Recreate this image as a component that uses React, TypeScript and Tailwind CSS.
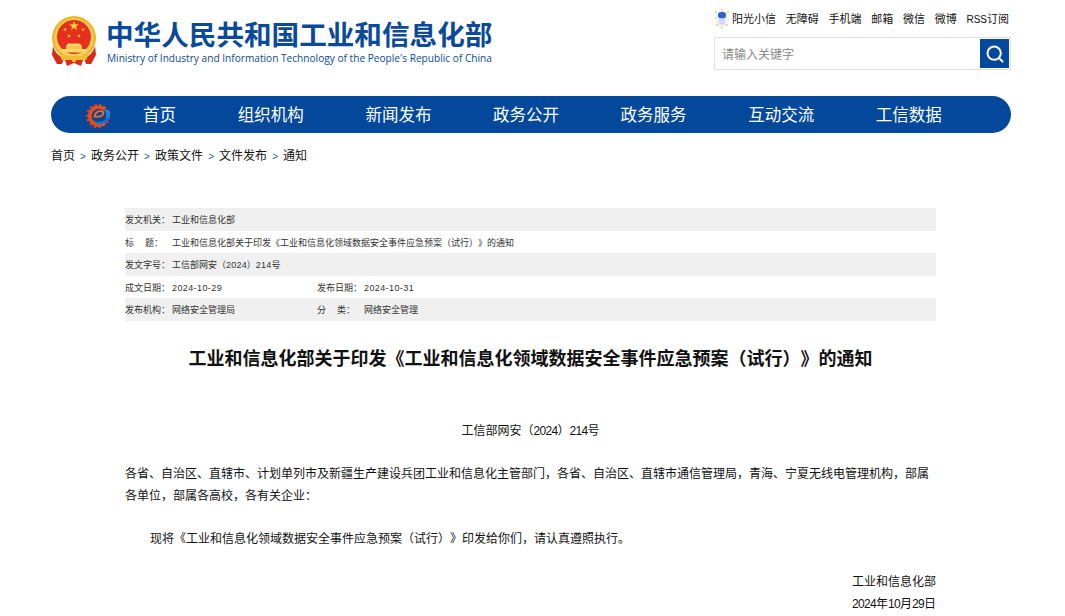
import { Search } from 'lucide-react';

const cjk = "font-['Liberation_Sans','Noto_Sans_CJK_SC',sans-serif] [text-spacing-trim:space-all]";

const topLinks = ['无障碍', '手机端', '邮箱', '微信', '微博'];
const navItems = ['组织机构', '新闻发布', '政务公开', '政务服务', '互动交流', '工信数据'];
const crumbs = ['首页', '政务公开', '政策文件', '文件发布', '通知'];

function Star({ x, y, r }: { x: number; y: number; r: number }) {
  const pts = Array.from({ length: 10 }, (_, i) => {
    const a = (Math.PI / 5) * i - Math.PI / 2;
    const d = i % 2 ? r * 0.42 : r;
    return `${x + d * Math.cos(a)},${y + d * Math.sin(a)}`;
  }).join(' ');
  return <polygon points={pts} fill="#f6d12f" />;
}

function Emblem() {
  return (
    <svg width="46" height="50" viewBox="0 0 46 50">
      <circle cx="23" cy="22" r="22" fill="#f0b52a" />
      <circle cx="23" cy="22" r="19.5" fill="#f7cf55" />
      <circle cx="23" cy="21" r="17" fill="#e5301f" />
      <Star x={23} y={10} r={5} />
      <Star x={14} y={13.5} r={2} />
      <Star x={32} y={13.5} r={2} />
      <Star x={18} y={20} r={2} />
      <Star x={28} y={20} r={2} />
      <path d="M17 27.5h12l2 2.5H15z" fill="#f8d66a" />
      <rect x="15" y="30" width="16" height="3" fill="#f6c845" />
      <rect x="11" y="33" width="24" height="3.5" fill="#f8d66a" />
      <path d="M2 30c2 7 6 10 11 12l-2 6H6l-5-9z" fill="#d92a1c" />
      <path d="M44 30c-2 7-6 10-11 12l2 6h5l5-9z" fill="#d92a1c" />
      <path d="M8 38c5 3 10 2 15 2s10 1 15-2l-3 6c-4 1-8 0-12 1-4-1-8 0-12-1z" fill="#f3bd34" />
      <path d="M14 44h18l-2 6-7-3-7 3z" fill="#dc2b1d" />
      <circle cx="23" cy="44" r="2.2" fill="#f3bd34" />
    </svg>
  );
}

function GearLogo() {
  return (
    <svg width="26" height="26" viewBox="0 0 26 26">
      <circle cx="12" cy="13" r="10.8" fill="none" stroke="#d9421e" strokeWidth="2.6" strokeDasharray="2.4 2.3" />
      <path d="M19 6.5A9 9 0 1 0 19 19.5" fill="none" stroke="#ee4a18" strokeWidth="3.6" />
      <path d="M8.5 14.5c0-4 3-6.5 6-6.5 2.6 0 3.6 2 2.2 3.8-1.4 1.6-4.4 2-7.2 1.8" fill="none" stroke="#f26a1b" strokeWidth="2" />
      <path d="M8 17.5c4 2.5 11 2.5 16-6.5.8 5-5 11-11 10.5-2-.2-4-1.5-5-4z" fill="#1577c8" />
      <path d="M18 7c3-1 6 0 6.5 3-1 3-3 5-5 6 1.5-3 1.5-6-1.5-9z" fill="#1b8ad6" />
    </svg>
  );
}

function Bulb() {
  return (
    <svg width="16" height="20" viewBox="0 0 16 20">
      <ellipse cx="8" cy="10" rx="6.5" ry="8.5" fill="#eef1fb" />
      <rect x="4" y="3" width="8" height="6.5" rx="3.2" fill="#2f62c9" />
      <rect x="5" y="9.5" width="6" height="6" fill="#cfd8f2" />
      <circle cx="2" cy="3" r="0.9" fill="#f2c53a" />
      <circle cx="8" cy="0.9" r="0.8" fill="#f2c53a" />
      <circle cx="14" cy="3" r="0.9" fill="#f2c53a" />
      <circle cx="1.5" cy="9" r="0.8" fill="#f2c53a" />
      <circle cx="3" cy="16" r="0.9" fill="#f2c53a" />
      <circle cx="8" cy="18.8" r="0.9" fill="#f2c53a" />
      <circle cx="13" cy="16" r="0.9" fill="#f2c53a" />
    </svg>
  );
}

function Num({ children }: { children: string }) {
  return <span className="tracking-[-0.67px]">{children}</span>;
}

export default function App() {
  return (
    <div className={`h-[616px] overflow-hidden bg-white text-[#222] ${cjk}`}>
      <div className="ml-[51px] w-[960px]">
        <header className="flex h-[96px] items-start justify-between">
          <div className="flex items-start gap-[9px] pt-[16px]">
            <Emblem />
            <div className="pt-[2px]">
              <div className="text-[27.6px] font-bold leading-[35px] text-[#0b4a9b]">中华人民共和国工业和信息化部</div>
              <div className="-mt-[1px] pl-[1px] font-['Open_Sans',sans-serif] text-[10.15px] leading-[12px] text-[#0b4a9b]">
                Ministry of Industry and Information Technology of the People's Republic of China
              </div>
            </div>
          </div>
          <div className="flex w-[297px] flex-col">
            <div className="flex h-[37px] items-center justify-between pr-[2px] pt-[1px] text-[11px] text-[#111]">
              <span className="flex items-center gap-[2px]">
                <Bulb />
                阳光小信
              </span>
              {topLinks.map(t => (
                <span key={t}>{t}</span>
              ))}
              <span>
                <span className="text-[10px]">RSS</span>订阅
              </span>
            </div>
            <div className="flex h-[33px] items-center border border-[#e2e2e2] pl-[7px] pr-[1px]">
              <span className="flex-1 pt-[2px] text-[12px] text-[#888]">请输入关键字</span>
              <div className="flex h-[29px] w-[29px] items-center justify-center bg-[#03489b]">
                <Search size={20} strokeWidth={2.4} className="text-white" />
              </div>
            </div>
          </div>
        </header>

        <nav className="flex h-[37px] items-center rounded-[19px] bg-[#03489b] pt-[2px] text-[16.5px] text-white">
          <div className="flex w-[61px] justify-end">
            <GearLogo />
          </div>
          <div className="w-[95px] text-center">首页</div>
          {navItems.map(item => (
            <div key={item} className="w-[127.6px] text-center">
              {item}
            </div>
          ))}
        </nav>

        <div className="flex h-[46px] items-center text-[12px] text-[#111]">
          {crumbs.map((c, i) => (
            <span key={c} className="flex items-center">
              {i > 0 && <span className="w-[16px] text-center text-[10px] text-[#1c5ea8]">&gt;</span>}
              {c}
            </span>
          ))}
        </div>

        <main className="ml-[74px] mt-[29px] w-[811px]">
          <div className="text-[9px] leading-[24.6px] text-[#333]">
            <div className="flex h-[22.6px] bg-[#f0f0f0]">
              <span className="w-[47px]">发文机关：</span>
              <span>工业和信息化部</span>
            </div>
            <div className="flex h-[22.6px]">
              <span className="flex w-[47px] justify-between pr-[9px]">
                <span>标</span>
                <span>题：</span>
              </span>
              <span>工业和信息化部关于印发《工业和信息化领域数据安全事件应急预案（试行）》的通知</span>
            </div>
            <div className="flex h-[22.6px] bg-[#f0f0f0]">
              <span className="w-[47px]">发文字号：</span>
              <span>
                工信部网安（<span className="tracking-[0.2px]">2024</span>）<span className="tracking-[0.2px]">214</span>号
              </span>
            </div>
            <div className="flex h-[22.6px]">
              <span className="w-[47px]">成文日期：</span>
              <span className="w-[145px] tracking-[0.4px]">2024-10-29</span>
              <span className="w-[47px]">发布日期：</span>
              <span className="tracking-[0.4px]">2024-10-31</span>
            </div>
            <div className="flex h-[22.6px] bg-[#f0f0f0]">
              <span className="w-[47px]">发布机构：</span>
              <span className="w-[145px]">网络安全管理局</span>
              <span className="flex w-[47px] justify-between pr-[9px]">
                <span>分</span>
                <span>类：</span>
              </span>
              <span>网络安全管理</span>
            </div>
          </div>

          <h1 className="mt-[25px] text-center text-[18px] font-bold leading-[26px] text-[#111]">
            工业和信息化部关于印发《工业和信息化领域数据安全事件应急预案（试行）》的通知
          </h1>

          <div className="text-[12px] leading-[22px] text-[#111]">
            <p className="mt-[48px] text-center">
              工信部网安（<Num>2024</Num>）<Num>214</Num>号
            </p>
            <p className="mt-[21px]">
              各省、自治区、直辖市、计划单列市及新疆生产建设兵团工业和信息化主管部门，各省、自治区、直辖市通信管理局，青海、宁夏无线电管理机构，部属各单位，部属各高校，各有关企业：
            </p>
            <p className="mt-[21px] indent-[25px]">现将《工业和信息化领域数据安全事件应急预案（试行）》印发给你们，请认真遵照执行。</p>
            <p className="mt-[21px] text-right">工业和信息化部</p>
            <p className="text-right">
              <Num>2024</Num>年<Num>10</Num>月<Num>29</Num>日
            </p>
          </div>
        </main>
      </div>
    </div>
  );
}
